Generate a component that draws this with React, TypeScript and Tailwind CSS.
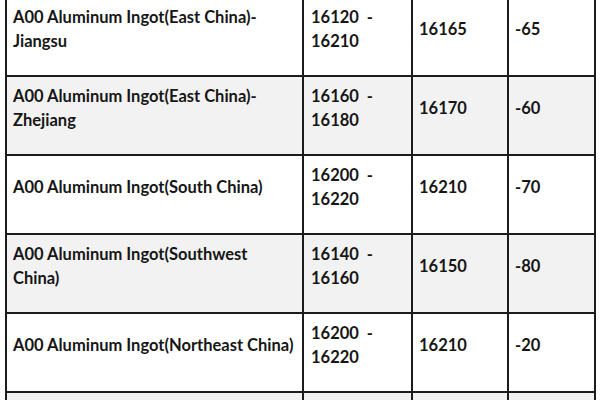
const rows = [
  {
    name: ["A00 Aluminum Ingot(East China)-", "Jiangsu"],
    range: ["16120  -", "16210"],
    avg: "16165",
    change: "-65",
  },
  {
    name: ["A00 Aluminum Ingot(East China)-", "Zhejiang"],
    range: ["16160  -", "16180"],
    avg: "16170",
    change: "-60",
  },
  {
    name: ["A00 Aluminum Ingot(South China)"],
    range: ["16200  -", "16220"],
    avg: "16210",
    change: "-70",
  },
  {
    name: ["A00 Aluminum Ingot(Southwest", "China)"],
    range: ["16140  -", "16160"],
    avg: "16150",
    change: "-80",
  },
  {
    name: ["A00 Aluminum Ingot(Northeast China)"],
    range: ["16200  -", "16220"],
    avg: "16210",
    change: "-20",
  },
  {
    name: [""],
    range: [""],
    avg: "",
    change: "",
  },
]

function Cell({ lines, className }: { lines: string[]; className: string }) {
  return (
    <div
      className={`flex flex-col justify-center pb-[16px] pl-[6px] whitespace-pre leading-[24px] ${className}`}
    >
      {lines.map((l, i) => (
        <span key={i}>{l}</span>
      ))}
    </div>
  )
}

export default function App() {
  return (
    <div
      className="w-[600px] h-[400px] overflow-hidden bg-white text-[16.5px] font-bold text-[#161616]"
      style={{ fontFamily: "Lato, 'Open Sans', sans-serif" }}
    >
      <div className="ml-[5px] mt-[-4px] w-[591px] border-t-2 border-l-2 border-r-2 border-[#1c1c1c]">
        {rows.map((r, i) => (
          <div
            key={i}
            className={`flex h-[79px] border-b-2 border-[#1c1c1c] ${
              i % 2 === 1 ? "bg-[#f2f2f2]" : "bg-white"
            }`}
          >
            <Cell lines={r.name} className="w-[297px] border-r-2 border-[#1c1c1c]" />
            <Cell lines={r.range} className="w-[109px] border-r-2 border-[#1c1c1c] pl-[7px]" />
            <Cell lines={[r.avg]} className="w-[96px] border-r-2 border-[#1c1c1c]" />
            <Cell lines={[r.change]} className="flex-1" />
          </div>
        ))}
      </div>
    </div>
  )
}
